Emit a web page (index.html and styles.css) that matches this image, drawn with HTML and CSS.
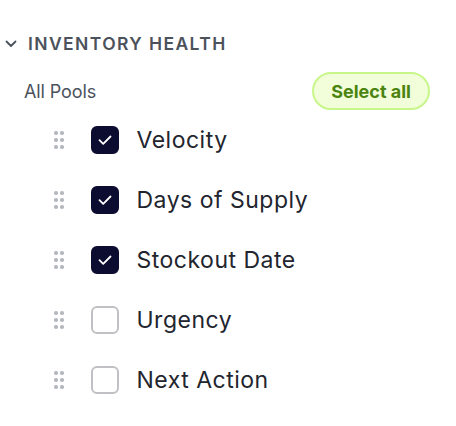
FILE: index.html
```html
<!DOCTYPE html>
<html>
<head>
<meta charset="utf-8">
<link rel="stylesheet" href="styles.css">
</head>
<body>
<div class="panel">
  <div class="section-head">
    <svg class="chev" width="12" height="8" viewBox="0 0 12 8"><path d="M1.5 1.5 L6 6 L10.5 1.5" fill="none" stroke="#4b525c" stroke-width="1.8" stroke-linecap="round" stroke-linejoin="round"/></svg>
    <span class="section-title">INVENTORY HEALTH</span>
  </div>
  <div class="pool-row">
    <span class="pool-label">All Pools</span>
    <button class="select-all">Select all</button>
  </div>
  <ul class="items">
    <li class="item">
      <span class="grip"><i></i><i></i><i></i><i></i><i></i><i></i></span>
      <span class="box checked"><svg width="16" height="12" viewBox="0 0 16 12"><path d="M2.5 6.2 L6.2 9.8 L13.5 2.5" fill="none" stroke="#fff" stroke-width="1.8" stroke-linecap="round" stroke-linejoin="round"/></svg></span>
      <span class="label">Velocity</span>
    </li>
    <li class="item">
      <span class="grip"><i></i><i></i><i></i><i></i><i></i><i></i></span>
      <span class="box checked"><svg width="16" height="12" viewBox="0 0 16 12"><path d="M2.5 6.2 L6.2 9.8 L13.5 2.5" fill="none" stroke="#fff" stroke-width="1.8" stroke-linecap="round" stroke-linejoin="round"/></svg></span>
      <span class="label">Days of Supply</span>
    </li>
    <li class="item">
      <span class="grip"><i></i><i></i><i></i><i></i><i></i><i></i></span>
      <span class="box checked"><svg width="16" height="12" viewBox="0 0 16 12"><path d="M2.5 6.2 L6.2 9.8 L13.5 2.5" fill="none" stroke="#fff" stroke-width="1.8" stroke-linecap="round" stroke-linejoin="round"/></svg></span>
      <span class="label">Stockout Date</span>
    </li>
    <li class="item">
      <span class="grip"><i></i><i></i><i></i><i></i><i></i><i></i></span>
      <span class="box"></span>
      <span class="label">Urgency</span>
    </li>
    <li class="item">
      <span class="grip"><i></i><i></i><i></i><i></i><i></i><i></i></span>
      <span class="box"></span>
      <span class="label">Next Action</span>
    </li>
  </ul>
</div>
</body>
</html>
```
FILE: styles.css
```css
* { box-sizing: border-box; }
html, body { margin: 0; padding: 0; background: #fff; }
body { font-family: Inter, "Noto Sans", sans-serif; color: #1f2430; }
.panel { width: 456px; padding: 32px 26px 0 5px; }
.section-head { display: flex; align-items: center; height: 22px; }
.chev { margin-right: 11px; margin-top: 2px; }
.section-title { font-size: 17.5px; font-weight: 600; letter-spacing: 1.4px; color: #4b525c; }
.pool-row { display: flex; align-items: center; justify-content: space-between; margin-top: 18px; padding-left: 19px; }
.pool-label { font-size: 18px; color: #4b525c; letter-spacing: -0.1px; }
.select-all { font-family: inherit; font-size: 18px; font-weight: 700; color: #4b8410; background: #f1fed9; border: 2px solid #c8f68a; border-radius: 20px; padding: 0 17px; height: 38px; letter-spacing: 0; }
.items { list-style: none; margin: 0; padding: 0; }
.item { display: flex; align-items: center; height: 60px; padding-left: 49px; }
.grip { display: grid; grid-template-columns: 3.5px 3.5px; column-gap: 2.5px; row-gap: 3.5px; width: 9.5px; }
.grip i { display: block; width: 3.5px; height: 3.5px; border-radius: 50%; background: #b4b8bf; }
.box { width: 28px; height: 28px; border-radius: 6px; border: 2px solid #bfc1c4; margin-left: 27px; display: flex; align-items: center; justify-content: center; }
.box.checked { background: #0c0b30; border-color: #0c0b30; }
.label { margin-left: 18px; font-size: 23px; font-weight: 400; color: #22252e; letter-spacing: 0.5px; }
```
